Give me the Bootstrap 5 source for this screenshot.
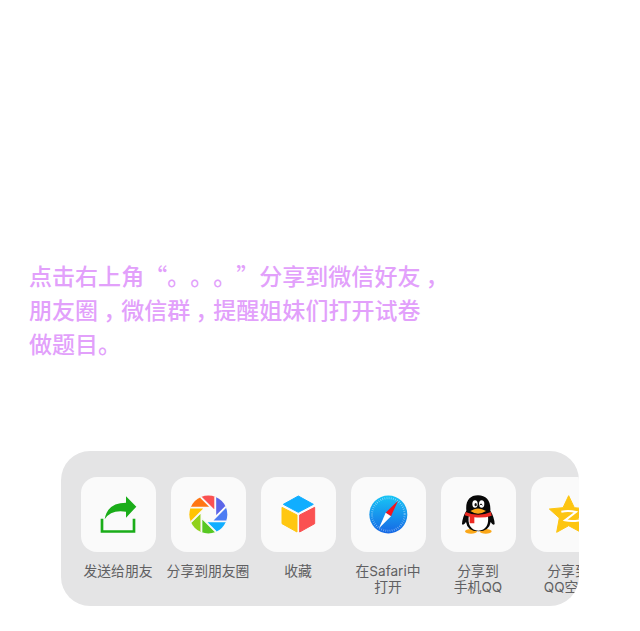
<!DOCTYPE html>
<html lang="zh-CN">
<head>
<meta charset="utf-8">
<meta name="viewport" content="width=device-width, initial-scale=1">
<title>分享</title>
<link rel="stylesheet" href="https://cdn.jsdelivr.net/npm/bootstrap@5.3.0/dist/css/bootstrap.min.css">
<style>
body{font-family:"Noto Sans CJK SC",sans-serif;background:#fff}
.screen{width:640px;height:631px;padding:258px 61px 0 29px}
.tip{color:#e2a0fb;font-size:23px;line-height:34px;font-weight:500;height:193px;white-space:nowrap;letter-spacing:.04px}
.glyph{display:inline-block;width:23px}
.comma{padding-left:5px}
.sheet{width:518px;height:155px;margin-left:32px;border-radius:29px;background:#e4e4e5;padding:26px 0 0 12px}
.share-item{width:90px;color:#606062;font-family:Inter,"Noto Sans CJK SC",sans-serif;font-size:13.8px;line-height:16px}
.share-item .latin{font-size:13.6px}
.tile{width:75px;height:75px;border-radius:16px;background:#fafafa;margin-bottom:11px}
.tile svg{width:75px;height:75px;display:block}
.blades path{stroke:#fafafa;stroke-width:4}
</style>
</head>
<body>
<main class="screen overflow-hidden">
  <p class="tip mb-0">点击右上角<span class="glyph text-end">“</span><span class="glyph">。</span><span class="glyph">。</span><span class="glyph">。</span><span class="glyph">”</span>分享到微信好友<span class="glyph comma">，</span><br>朋友圈<span class="glyph comma">，</span>微信群<span class="glyph comma">，</span>提醒姐妹们打开试卷<br>做题目。</p>
  <div class="sheet d-flex overflow-hidden">
    <div class="share-item flex-shrink-0 d-flex flex-column align-items-center text-center text-nowrap">
      <div class="tile"><svg viewBox="18 16 225 225"><path d="M81 141V179.500H177V141" fill="none" stroke="#1aad19" stroke-width="8"/><path d="M89 143Q97 93 153 93V74L184 105L153 138V120Q107 113 89 143Z" fill="#1aad19"/></svg></div>
      <div>发送给朋友</div>
    </div>
    <div class="share-item flex-shrink-0 d-flex flex-column align-items-center text-center text-nowrap">
      <div class="tile"><svg viewBox="17 16 225 225"><defs><clipPath id="lens"><circle cx="129" cy="128.500" r="57"/></clipPath></defs>
        <g clip-path="url(#lens)" class="blades">
          <path d="M98 67L129 55H149V118Z" fill="#fa5151"/>
          <path d="M98 67L129 55H149V118Z" fill="#5b65e8" transform="rotate(45 129 128.500)"/>
          <path d="M98 67L129 55H149V118Z" fill="#4c7cf3" transform="rotate(90 129 128.500)"/>
          <path d="M98 67L129 55H149V118Z" fill="#10aeff" transform="rotate(135 129 128.500)"/>
          <path d="M98 67L129 55H149V118Z" fill="#57c822" transform="rotate(180 129 128.500)"/>
          <path d="M98 67L129 55H149V118Z" fill="#91d11b" transform="rotate(225 129 128.500)"/>
          <path d="M98 67L129 55H149V118Z" fill="#ffc300" transform="rotate(270 129 128.500)"/>
          <path d="M98 67L129 55H149V118Z" fill="#ff7613" transform="rotate(315 129 128.500)"/>
        </g></svg></div>
      <div>分享到朋友圈</div>
    </div>
    <div class="share-item flex-shrink-0 d-flex flex-column align-items-center text-center text-nowrap">
      <div class="tile"><svg viewBox="17 16 225 225"><g stroke-width="3" stroke-linejoin="round"><path d="M129 73L174 98L129 122L84 98Z" fill="#10aeff" stroke="#10aeff"/><path d="M80 107L125 130V181L80 156Z" fill="#ffc711" stroke="#ffc711"/><path d="M178 107L133 130V181L178 156Z" fill="#fa5151" stroke="#fa5151"/></g></svg></div>
      <div>收藏</div>
    </div>
    <div class="share-item flex-shrink-0 d-flex flex-column align-items-center text-center text-nowrap">
      <div class="tile"><svg viewBox="17 16 225 225"><defs><linearGradient id="sky" x2="0" y2="1"><stop stop-color="#18c5f5"/><stop offset="1" stop-color="#1667e5"/></linearGradient></defs><circle cx="129" cy="128.500" r="57" fill="url(#sky)"/><circle cx="129" cy="128.500" r="49" fill="none" stroke="#fff" stroke-opacity=".65" stroke-width="6" stroke-dasharray="1.500 4.915"/><path d="M158 87L137 134L121 123Z" fill="#f5141c"/><path d="M121 123L137 134L101 170Z" fill="#fff"/></svg></div>
      <div>在<span class="latin">Safari</span>中<br>打开</div>
    </div>
    <div class="share-item flex-shrink-0 d-flex flex-column align-items-center text-center text-nowrap">
      <div class="tile"><svg viewBox="17 16 225 225"><ellipse cx="107" cy="179" rx="18" ry="7" fill="#faa719"/><ellipse cx="151" cy="179" rx="18" ry="7" fill="#faa719"/><path d="M93 117C90 88 103 71 128 71S167 88 165 117Q177 136 178 157Q174 164 166 151Q162 179 129 179T92 151Q83 164 80 157Q81 136 93 117Z" fill="#080808"/><path d="M101 130H157C163 157 151 177 129 177S95 157 101 130Z" fill="#fff"/><path d="M91 121Q128 138 167 121L169 132Q147 140 117 137V155H103V135L88 131Z" fill="#ed2b23"/><ellipse cx="119" cy="97" rx="8" ry="11" fill="#fff"/><ellipse cx="139" cy="97" rx="8" ry="11" fill="#fff"/><ellipse cx="121" cy="99" rx="3.500" ry="5" fill="#111"/><path d="M133 101Q137 92 141 101" fill="none" stroke="#111" stroke-width="3"/><path d="M105 118Q128 103 152 118Q128 134 105 118Z" fill="#faa719"/></svg></div>
      <div>分享到<br>手机<span class="latin">QQ</span></div>
    </div>
    <div class="share-item flex-shrink-0 d-flex flex-column align-items-center text-center text-nowrap">
      <div class="tile"><svg viewBox="17 16 225 225"><path d="M130 72L147 108L187 112L158 139L167 182L130 162L94 182L102 139L72 112L113 108Z" fill="#fdc511" stroke="#fdc511" stroke-width="3" stroke-linejoin="round"/><path d="M108 120Q130 115 152 121L119 146Q140 151 169 145" fill="none" stroke="#fff" stroke-width="6"/></svg></div>
      <div>分享到<br><span class="latin">QQ</span>空间</div>
    </div>
  </div>
</main>
<script src="https://cdn.jsdelivr.net/npm/bootstrap@5.3.0/dist/js/bootstrap.bundle.min.js"></script>
</body>
</html>
